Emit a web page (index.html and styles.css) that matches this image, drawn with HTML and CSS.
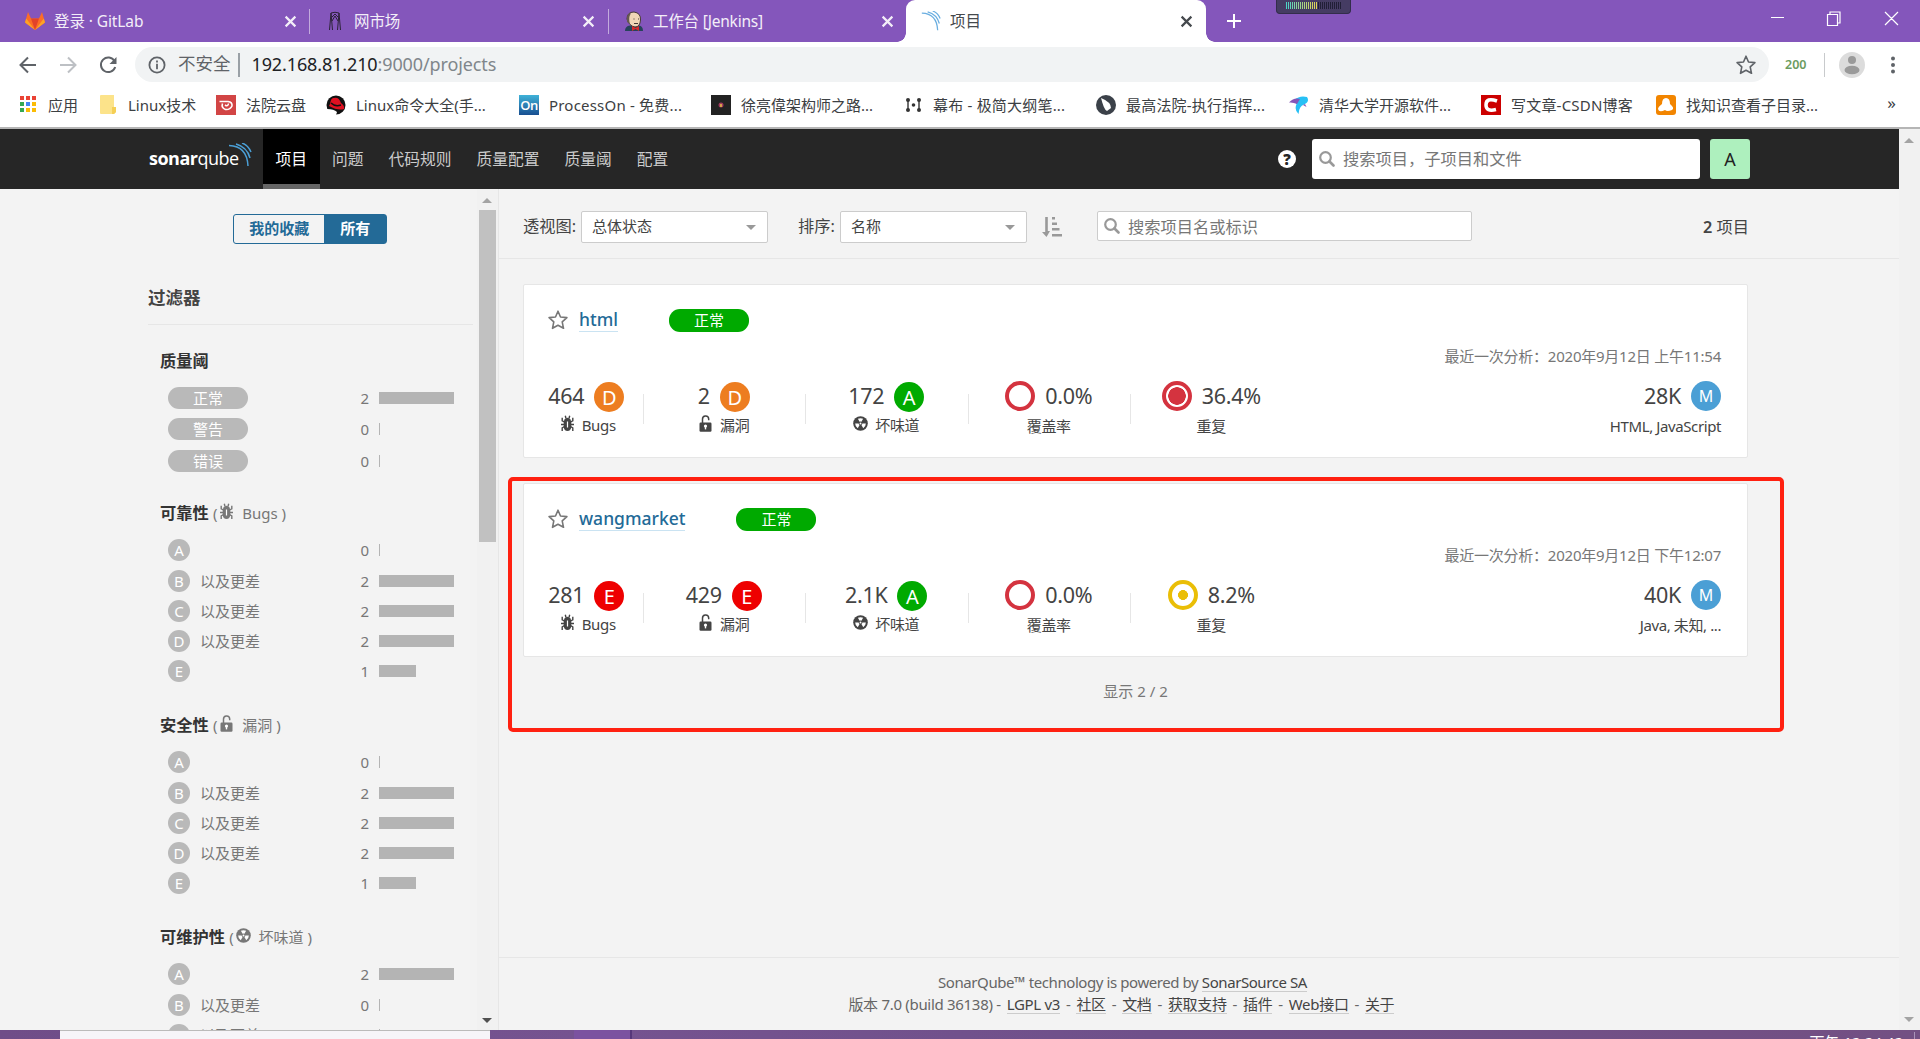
FILE: index.html
```html
<!DOCTYPE html>
<html lang="zh-CN">
<head>
<meta charset="utf-8">
<title>项目</title>
<link rel="stylesheet" href="styles.css">
</head>
<body>

<!-- shared icons -->
<svg class="defs" width="0" height="0">
  <symbol id="bug" viewBox="0 0 13 17">
    <path d="M3.500 4.500Q6.500 .8 9.500 4.500L10.300 7V12Q9.800 16 6.500 16Q3.200 16 2.700 12V7Z" fill="currentColor"/>
    <path d="M5 3.500 4.300 .8M8 3.500 8.700 .8M3.500 7 1.200 5.800V2.800M9.500 7 11.800 5.800V2.800M3 9.500H0M10 9.500H13M3.500 11.500 1.200 12.800V16M9.500 11.500 11.800 12.800V16" fill="none" stroke="currentColor" stroke-width="1.400"/>
    <path d="M5.900 6.500h1.200v6H5.900z" fill="#fff"/>
  </symbol>
  <symbol id="lock" viewBox="0 0 14 17">
    <rect x="1" y="7.5" width="12" height="9.3" rx="1.2" fill="currentColor"/>
    <path d="M4 8V4.4A3.1 3.1 0 0 1 10.2 4v1.2" fill="none" stroke="currentColor" stroke-width="1.5"/>
    <circle cx="7" cy="11" r="1.6" fill="#fff"/>
    <path d="M6.3 11h1.4v3.4H6.3z" fill="#fff"/>
  </symbol>
  <symbol id="smell" viewBox="0 0 16 16">
    <circle cx="8" cy="8" r="7.8" fill="currentColor"/>
    <path d="M7 6.200 5.200 3Q8 1.600 10.800 3L9 6.200Q8 5.600 7 6.200ZM6 8H2.300Q2.300 11.300 5.100 13L7 9.700Q6 9 6 8ZM10 8H13.700Q13.700 11.300 10.900 13L9 9.700Q10 9 10 8Z" fill="#fff"/>
    <circle cx="8" cy="8" r="1" fill="#fff"/>
  </symbol>
  <symbol id="search" viewBox="0 0 16 16">
    <circle cx="6.500" cy="6.500" r="5.300" fill="none" stroke="currentColor" stroke-width="2.200"/>
    <path d="M10.500 10.500 14.500 14.500" stroke="currentColor" stroke-width="2.600" stroke-linecap="round"/>
  </symbol>
  <symbol id="star" viewBox="0 0 20 20">
    <path d="M10 1.200 12.500 7 18.900 7.600 14.200 11.900 15.500 18.300 10 15.200 4.500 18.300 5.800 11.900 1.100 7.600 7.500 7Z" fill="none" stroke="currentColor" stroke-width="1.600" stroke-linejoin="round"/>
  </symbol>
  <symbol id="waves" viewBox="0 0 24 24">
    <path d="M1 2.500Q19 3 20 23M8 1Q19 4 22 15M14 0Q20 2 23 9" fill="none" stroke="currentColor" stroke-width="1.500"/>
  </symbol>
  <symbol id="cross" viewBox="0 0 12 12">
    <path d="M1.500 1.500 10.500 10.500M10.500 1.500 1.500 10.500" stroke="currentColor" stroke-width="2"/>
  </symbol>
</svg>

<!-- browser tabs -->
<div class="tabs">
  <div class="tab tab-gitlab">
    <svg class="favicon" viewBox="0 0 20 20"><path d="M10 19 0 11.500 3 1 6 7.500H14L17 1 20 11.500Z" fill="#fc6d26"/><path d="M10 19 6 7.500H14Z" fill="#e24329"/><path d="M10 19 0 11.500 1.200 7.500ZM10 19 20 11.500 18.800 7.500Z" fill="#fca326"/></svg>
    <span class="tab-title">登录 · GitLab</span>
    <svg class="close"><use href="#cross"/></svg>
  </div>
  <div class="tab">
    <svg class="favicon thin" viewBox="0 0 14 20"><path d="M1.500 19 3 2Q7 .5 11 2L12.500 19M3 2 4.500 19M11 2 9.500 19M4 6 7 3 10 6M4 10 7 5 10 10" fill="none" stroke="#2b2237" stroke-width="1"/></svg>
    <span class="tab-title">网市场</span>
    <svg class="close"><use href="#cross"/></svg>
  </div>
  <div class="tab tab-last">
    <svg class="favicon" viewBox="0 0 20 20"><path d="M1 20Q1 15 6 14.500H15Q19 15 19 20Z" fill="#26435a"/><path d="M3 8Q3 1 10 1Q17 2 16.500 9Q16 16 11 16Q5 15 3 8Z" fill="#f0d6b7" stroke="#463a35" stroke-width="1"/><path d="M3 11Q2 3 7 2Q4 7 6 13Z" fill="#645850"/><path d="M9.500 8h1M14 8h1M10 12.500H14" stroke="#463a35"/><path d="M8 15 11.500 17 15 15V20L11.500 18 8 20Z" fill="#d7282b"/></svg>
    <span class="tab-title">工作台 [Jenkins]</span>
    <svg class="close"><use href="#cross"/></svg>
  </div>
  <div class="tab active">
    <svg class="favicon wave"><use href="#waves"/></svg>
    <span class="tab-title">项目</span>
    <svg class="close"><use href="#cross"/></svg>
  </div>
  <svg class="newtab" viewBox="0 0 16 16"><path d="M8 1V15M1 8H15" stroke="#fff" stroke-width="2"/></svg>
  <div class="meter"><i></i><b></b></div>
  <svg class="winbtns" width="130" height="16" viewBox="0 0 130 16">
    <g fill="none" stroke="#fff" stroke-width="1.200"><path d="M1 6.500H14M57.500 3.500h10v11h-10zM60 3V1H70V12H68M115 1 128 14M128 1 115 14"/></g>
  </svg>
</div>

<!-- address bar -->
<div class="toolbar">
  <svg class="navbtn" viewBox="0 0 18 18"><path d="M17 9H2M9 1.500 1.500 9 9 16.500" fill="none" stroke="#5f6368" stroke-width="2"/></svg>
  <svg class="navbtn" viewBox="0 0 18 18"><path d="M1 9H16M9 1.500 16.500 9 9 16.500" fill="none" stroke="#bdc0c4" stroke-width="2"/></svg>
  <svg class="navbtn" viewBox="0 0 18 18"><path d="M15.500 5A7.300 7.300 0 1 0 16.200 11" fill="none" stroke="#5f6368" stroke-width="2"/><path d="M17.500 1V8H10.500Z" fill="#5f6368"/></svg>
  <div class="omnibox">
    <svg class="info" viewBox="0 0 18 18"><circle cx="9" cy="9" r="7.600" fill="none" stroke="#5f6368" stroke-width="1.800"/><path d="M8.100 4.500h1.800v1.900H8.100zM8.100 7.800h1.800v5.500H8.100z" fill="#5f6368"/></svg>
    <span class="insecure">不安全</span>
    <span class="url">192.168.81.210<em>:9000/projects</em></span>
    <svg class="bookmark"><use href="#star"/></svg>
  </div>
  <span class="status">200</span>
  <svg class="person" viewBox="0 0 26 26"><circle cx="13" cy="13" r="13" fill="#dcdcdc"/><circle cx="13" cy="8" r="4" fill="#9a9a9a"/><ellipse cx="13" cy="18" rx="7.500" ry="4.300" fill="#9a9a9a"/></svg>
  <svg class="more" viewBox="0 0 4 18"><circle cx="2" cy="2.500" r="2"/><circle cx="2" cy="9" r="2"/><circle cx="2" cy="15.500" r="2"/></svg>
</div>

<!-- bookmarks -->
<div class="bookmarks">
  <div class="bm w80"><svg viewBox="0 0 20 20"><path d="M0 1h4v4H0zM6 1h4v4H6zM12 1h4v4h-4z" fill="#ea4335"/><path d="M0 7h4v4H0zM0 13h4v4H0z" fill="#34a853"/><path d="M6 7h4v4H6z" fill="#4285f4"/><path d="M12 7h4v4h-4zM6 13h4v4H6zM12 13h4v4h-4z" fill="#fbbc05"/></svg>应用</div>
  <div class="bm w116"><svg viewBox="0 0 20 20"><path d="M1 0h13v12h2v5l-2 2H1Q0 19 0 18V1Q0 0 1 0Z" fill="#fce38a"/><path d="M12 12h4v5l-2 2h-2z" fill="#f5cf55"/></svg>Linux技术</div>
  <div class="bm w110"><svg viewBox="0 0 20 20"><path d="M0 0h20v20H0z" fill="#d24545"/><path d="M3.500 6.500H12Q16.500 7 16 11Q14 15 9.500 14.500Q5 13 6.500 8.500M9 10Q12 12 12.500 8.500" fill="none" stroke="#fff" stroke-width="1.600"/></svg>法院云盘</div>
  <div class="bm w193"><svg viewBox="0 0 20 20"><circle cx="10" cy="10" r="9.500" fill="#111"/><path d="M4 9Q5 2 8 3Q13 2 15 8Q19 11 18 14Q12 16 3 11Z" fill="#e01020"/><path d="M5 8Q9 12 15 10" fill="none" stroke="#111" stroke-width="1.500"/><path d="M1 14Q8 14 11 17L10 20H0Z" fill="#fff"/></svg>Linux命令大全(手...</div>
  <div class="bm w192"><i class="on">On</i><span class="wide">ProcessOn - 免费...</span></div>
  <div class="bm w192"><svg viewBox="0 0 20 20"><path d="M0 0h20v20H0z" fill="#222"/><circle cx="10" cy="10" r="2.500" fill="#a33b5f"/><path d="M9 9h2v3H9z" fill="#d5a14b"/></svg>徐亮偉架构师之路...</div>
  <div class="bm w193"><svg viewBox="0 0 20 20"><g fill="#333"><circle cx="5" cy="5" r="2"/><circle cx="16" cy="5" r="2"/><circle cx="5" cy="15" r="2"/><circle cx="16" cy="15" r="2"/><circle cx="10.500" cy="10" r="1.800"/><path d="M4.300 5h1.400v10H4.300zM15.300 5h1.400v10h-1.400z"/></g></svg><span class="wide">幕布 - 极简大纲笔...</span></div>
  <div class="bm w193"><svg viewBox="0 0 20 20"><circle cx="10" cy="10" r="10" fill="#3b4149"/><path d="M5 3Q15 7 15 13L11 16Q8 15 5 3Z" fill="#fff"/></svg><span class="wide">最高法院-执行指挥...</span></div>
  <div class="bm w192"><svg viewBox="0 0 20 20"><path d="M5 5Q11 0 18 2Q21 7 15 9.500Q10 11 9.500 19Q5 15 7.500 9Z" fill="#27c0f5"/><path d="M0 7.500Q5 2 11 4L8 9Q4 7 0 7.500Z" fill="#8656b8"/><path d="M16 9 17.500 12 14 10Z" fill="#8656b8"/></svg>清华大学开源软件...</div>
  <div class="bm w175"><svg viewBox="0 0 20 20"><path d="M0 0h20v20H0z" fill="#c00"/><path d="M16 6Q5 2 5 10Q5 17 15 14.500" fill="none" stroke="#fff" stroke-width="3.500"/></svg><span class="wide">写文章-CSDN博客</span></div>
  <div class="bm"><svg viewBox="0 0 20 20"><rect width="20" height="20" rx="3" fill="#f28500"/><path d="M10 3Q14 3 14 9Q19 13 16 15Q11 17 9 15Q3 18 2 14Q2 12 6 9Q6 3 10 3Z" fill="#fff"/></svg>找知识查看子目录...</div>
  <span class="chevrons">»</span>
</div>

<div class="viewport">
<div class="page">

  <div class="navbar">
    <div class="logo"><b>sonar</b>qube<svg><use href="#waves"/></svg></div>
    <a class="active">项目</a><a>问题</a><a>代码规则</a><a>质量配置</a><a>质量阈</a><a>配置</a>
    <span class="help">?</span>
    <div class="global-search"><svg><use href="#search"/></svg>搜索项目，子项目和文件</div>
    <span class="avatar">A</span>
  </div>

  <div class="content">
    <div class="side">
      <div class="toggle"><span>我的收藏</span><span class="on">所有</span></div>
      <h2>过滤器</h2>

      <div class="facet gates">
        <h3>质量阈</h3>
        <div class="row"><span class="level">正常</span><span class="num">2</span><i class="bar full"></i></div>
        <div class="row"><span class="level">警告</span><span class="num">0</span><i class="bar"></i></div>
        <div class="row"><span class="level">错误</span><span class="num">0</span><i class="bar"></i></div>
      </div>

      <div class="facet">
        <h3>可靠性 <small>( <svg><use href="#bug"/></svg> Bugs )</small></h3>
        <div class="row"><span class="rate">A</span><span class="num">0</span><i class="bar"></i></div>
        <div class="row"><span class="rate">B</span>以及更差<span class="num">2</span><i class="bar full"></i></div>
        <div class="row"><span class="rate">C</span>以及更差<span class="num">2</span><i class="bar full"></i></div>
        <div class="row"><span class="rate">D</span>以及更差<span class="num">2</span><i class="bar full"></i></div>
        <div class="row"><span class="rate">E</span><span class="num">1</span><i class="bar half"></i></div>
      </div>

      <div class="facet">
        <h3>安全性 <small>( <svg><use href="#lock"/></svg> 漏洞 )</small></h3>
        <div class="row"><span class="rate">A</span><span class="num">0</span><i class="bar"></i></div>
        <div class="row"><span class="rate">B</span>以及更差<span class="num">2</span><i class="bar full"></i></div>
        <div class="row"><span class="rate">C</span>以及更差<span class="num">2</span><i class="bar full"></i></div>
        <div class="row"><span class="rate">D</span>以及更差<span class="num">2</span><i class="bar full"></i></div>
        <div class="row"><span class="rate">E</span><span class="num">1</span><i class="bar half"></i></div>
      </div>

      <div class="facet">
        <h3>可维护性 <small>( <svg><use href="#smell"/></svg> 坏味道 )</small></h3>
        <div class="row"><span class="rate">A</span><span class="num">2</span><i class="bar full"></i></div>
        <div class="row"><span class="rate">B</span>以及更差<span class="num">0</span><i class="bar"></i></div>
        <div class="row"><span class="rate">C</span>以及更差<span class="num">0</span><i class="bar"></i></div>
      </div>
    </div>
    <div class="side-scroll"><i class="up"></i><i class="thumb"></i><i class="down"></i></div>

    <div class="main">
      <div class="filters">
        <label>透视图:</label><div class="select view">总体状态</div>
        <label>排序:</label><div class="select">名称</div>
        <svg class="sort" viewBox="0 0 20 20"><path d="M3.200 0h2.600v14H8L4.500 20 0 15h3.200zM10 0h3v2.600h-3zM10 5.500h5v2.600h-5zM10 11h7.500v2.600H10zM10 17h10v2.600H10z" fill="#999"/></svg>
        <div class="search"><svg><use href="#search"/></svg><span>搜索项目名或标识</span></div>
        <span class="total"><b>2</b> 项目</span>
      </div>

      <div class="card">
        <div class="head"><svg><use href="#star"/></svg><a>html</a><span class="level">正常</span></div>
        <div class="date">最近一次分析：2020年9月12日 上午11:54</div>
        <div class="measures">
          <div class="measure first"><p>464<span class="rate d">D</span></p><p class="label"><svg class="bug"><use href="#bug"/></svg>Bugs</p></div>
          <div class="measure"><p>2<span class="rate d">D</span></p><p class="label"><svg><use href="#lock"/></svg>漏洞</p></div>
          <div class="measure"><p>172<span class="rate a">A</span></p><p class="label"><svg><use href="#smell"/></svg>坏味道</p></div>
          <div class="measure"><p><i class="ring"></i>0.0%</p><p class="label low-label">覆盖率</p></div>
          <div class="measure last"><p><i class="ring dup"></i>36.4%</p><p class="label low-label">重复</p></div>
          <div class="size"><p>28K<span class="rate m">M</span></p><p class="label low-label">HTML, JavaScript</p></div>
        </div>
      </div>

      <div class="card">
        <div class="head"><svg><use href="#star"/></svg><a>wangmarket</a><span class="level">正常</span></div>
        <div class="date">最近一次分析：2020年9月12日 下午12:07</div>
        <div class="measures">
          <div class="measure first"><p>281<span class="rate e">E</span></p><p class="label"><svg class="bug"><use href="#bug"/></svg>Bugs</p></div>
          <div class="measure"><p>429<span class="rate e">E</span></p><p class="label"><svg><use href="#lock"/></svg>漏洞</p></div>
          <div class="measure"><p>2.1K<span class="rate a">A</span></p><p class="label"><svg><use href="#smell"/></svg>坏味道</p></div>
          <div class="measure"><p><i class="ring"></i>0.0%</p><p class="label low-label">覆盖率</p></div>
          <div class="measure last"><p><i class="ring low"></i>8.2%</p><p class="label low-label">重复</p></div>
          <div class="size"><p>40K<span class="rate m">M</span></p><p class="label low-label">Java, 未知, ...</p></div>
        </div>
      </div>

      <div class="count">显示 2 / 2</div>
      <div class="footer">
        <div class="powered">SonarQube™ technology is powered by <a>SonarSource SA</a></div>
        <div class="links">版本 7.0 (build 36138) - <a>LGPL v3</a> - <a>社区</a> - <a>文档</a> - <a>获取支持</a> - <a>插件</a> - <a>Web接口</a> - <a>关于</a></div>
      </div>
      <div class="mark"></div>
    </div>
  </div>
</div>
<div class="page-scroll"><i class="up"></i><i class="down"></i></div>
</div>

<div class="taskbar"><i class="find"></i><i class="task"></i><span class="clock">下午 12:24:42</span></div>

</body>
</html>
```
FILE: styles.css
```css
* {
  box-sizing: border-box;
}

body {
  margin: 0;
  height: 1039px;
  overflow: hidden;
  background: #f3f3f3;
  color: #444;
  font: 15px/22px "Noto Sans", "Noto Sans CJK SC", sans-serif;
  white-space: nowrap;
}

p, h2, h3 {
  margin: 0;
}

svg {
  flex: none;
}

.defs {
  position: absolute;
}

/* tabs */
.tabs {
  display: flex;
  position: relative;
  height: 42px;
  background: #8456bb;
  color: #f3eef8;
}

.tab {
  display: flex;
  align-items: center;
  position: relative;
  width: 299px;
  padding: 0 14px 0 18px;
}

.tab-gitlab {
  width: 310px;
  padding: 0 13px 0 25px;
}

.tab-gitlab::after, .tab:nth-child(2)::after {
  content: "";
  position: absolute;
  right: 0;
  top: 9px;
  width: 1px;
  height: 25px;
  background: #c3abdd;
}

.tab-last {
  width: 297px;
  padding: 0 12px 0 15px;
}

.tab.active {
  width: 300px;
  padding: 0 13px 0 15px;
  background: #fff;
  border-radius: 9px 9px 0 0;
  color: #45494d;
}

.tab.active::before, .tab.active::after {
  content: "";
  position: absolute;
  bottom: 0;
  left: -9px;
  width: 9px;
  height: 9px;
  background: radial-gradient(circle at 0 0, #8456bb 8.5px, #fff 9px);
}

.tab.active::after {
  left: auto;
  right: -9px;
  background: radial-gradient(circle at 100% 0, #8456bb 8.5px, #fff 9px);
}

.favicon {
  width: 20px;
  height: 20px;
}

.favicon.thin {
  width: 14px;
  margin-right: 3px;
}

.wave {
  color: #6aaee0;
}

.tab-title {
  margin-left: 9px;
  font-size: 15.5px;
  letter-spacing: -0.1px;
}

.tab-last .tab-title {
  letter-spacing: -0.2px;
}

.close {
  width: 13px;
  height: 13px;
  margin-left: auto;
}

.newtab {
  width: 16px;
  height: 16px;
  margin: 13px 0 0 20px;
}

.meter {
  display: flex;
  position: absolute;
  left: 1276px;
  top: 0;
  width: 75px;
  height: 14px;
  padding: 2px 8px;
  background: #453c63;
  border: 1px solid #332d4b;
  border-top: 0;
  border-radius: 0 0 4px 4px;
}

.meter i, .meter b {
  width: 33px;
  height: 7px;
  background: repeating-linear-gradient(90deg, #453c63 0 1px, transparent 1px 2px), linear-gradient(90deg, #41d3cf, #9dd38a, #e2d652);
}

.meter b {
  width: 25px;
  background: repeating-linear-gradient(90deg, #453c63 0 1px, #211f36 1px 2px);
}

.winbtns {
  margin: 11px 20px 0 auto;
}

/* address bar */
.toolbar {
  display: flex;
  align-items: center;
  height: 45px;
  padding: 0 25px 0 19px;
  background: #fff;
}

.navbtn {
  width: 18px;
  height: 18px;
  margin-right: 22px;
}

.navbtn:nth-child(3) {
  margin-right: 18px;
}

.omnibox {
  display: flex;
  align-items: center;
  width: 1634px;
  height: 35px;
  padding: 0 13px 0 13px;
  background: #f1f3f4;
  border-radius: 18px;
  font-size: 17.5px;
}

.info {
  width: 18px;
  height: 18px;
}

.insecure {
  height: 24px;
  margin-left: 12px;
  padding-right: 7px;
  border-right: 2px solid #9aa0a6;
  color: #5f6368;
  line-height: 21px;
}

.url {
  margin: -2px 0 0 12px;
  color: #202124;
  font-size: 18px;
  letter-spacing: -0.12px;
}

.url em {
  color: #80868b;
  font-style: normal;
}

.bookmark {
  width: 20px;
  height: 20px;
  margin-left: auto;
  color: #5f6368;
}

.status {
  width: 56px;
  padding-left: 16px;
  border-right: 1px solid #c8cacc;
  color: #6c9c60;
  font: 600 12.5px/24px "Noto Sans", sans-serif;
}

.person {
  width: 26px;
  height: 26px;
  margin-left: 14px;
}

.more {
  width: 4px;
  height: 20px;
  margin-left: auto;
  fill: #5f6368;
}

/* bookmarks */
.bookmarks {
  display: flex;
  position: relative;
  height: 42px;
  padding: 7px 0 0 20px;
  background: #fff;
  border-bottom: 2px solid #b5b5b5;
  color: #3c4043;
}

.bm {
  display: flex;
  align-items: center;
  height: 22px;
  gap: 10px;
}

.bm svg, .bm .on {
  width: 20px;
  height: 20px;
}

.bm .on {
  background: linear-gradient(#3fb2d8, #184f91);
  color: #fff;
  font: 600 13px/20px "Open Sans", sans-serif;
  letter-spacing: -0.5px;
  text-align: center;
}

.wide { letter-spacing: 0.2px; }
.w80 { width: 80px; }
.w80, .w116 { gap: 8px; }
.w116 { width: 116px; }
.w110 { width: 110px; }
.w193 { width: 193px; }
.w192 { width: 192px; }
.w175 { width: 175px; }

.chevrons {
  margin: -2px 24px 0 auto;
  font-size: 17px;
}

/* page */
.viewport {
  display: flex;
  height: 901px;
  overflow: hidden;
}

.page {
  width: 1899px;
}

.navbar {
  display: flex;
  height: 60px;
  padding-left: 149px;
  background: #262626;
  color: #ccc;
  font-size: 15.75px;
}

.navbar a {
  height: 60px;
  padding: 0 12.5px;
  line-height: 61px;
}

.navbar a.active {
  background: #000;
  border-bottom: 5px solid #666;
  color: #fff;
}

.logo {
  position: relative;
  width: 114px;
  color: #fff;
  font: 18px/58px "Open Sans", sans-serif;
  letter-spacing: -0.5px;
}

.logo svg {
  position: absolute;
  left: 79px;
  top: 14px;
  width: 24px;
  height: 24px;
  color: #4b9fd5;
}

.help {
  width: 18px;
  height: 18px;
  margin: 21px 16px 0 auto;
  background: #fff;
  border-radius: 9px;
  color: #262626;
  font: 900 15px/18px "Open Sans", sans-serif;
  text-align: center;
}

.global-search {
  display: flex;
  align-items: center;
  width: 388px;
  height: 40px;
  margin: 10px 10px 0 0;
  padding-left: 7px;
  background: #fff;
  border-radius: 3px;
  color: #777;
  font-size: 16.25px;
}

.global-search svg, .search svg {
  width: 16px;
  height: 16px;
  margin-right: 8px;
  color: #999;
}

.avatar {
  width: 40px;
  height: 40px;
  margin: 10px 149px 0 0;
  background: #aef0be;
  border-radius: 3px;
  color: #222;
  font-size: 18px;
  line-height: 41px;
  text-align: center;
}

.content {
  display: flex;
  height: 841px;
}

/* filters on the left */
.side {
  width: 477px;
  height: 841px;
  padding: 25px 4px 0 148px;
  overflow: hidden;
}

.toggle {
  display: flex;
  width: 154px;
  height: 30px;
  margin-left: 85px;
  border: 1px solid #236a97;
  border-radius: 3px;
  color: #236a97;
  font-weight: 600;
  line-height: 27px;
  text-align: center;
}

.toggle span {
  width: 91px;
}

.toggle .on {
  width: 62px;
  background: #236a97;
  color: #fff;
}

.side h2 {
  height: 81px;
  border-bottom: 1px solid #e6e6e6;
  font-size: 17.5px;
  line-height: 107px;
}

.facet {
  padding: 24px 0 0 12px;
  margin-bottom: 2.5px;
}

.facet h3 {
  height: 33px;
  color: #333;
  font-size: 16.25px;
  font-weight: 600;
  line-height: 24px;
}

.facet small {
  display: inline-block;
  color: #777;
  font-size: 15px;
  font-weight: 400;
}

.facet small svg {
  width: 15px;
  height: 17px;
  margin: 0 4px 0 -2px;
  vertical-align: -1px;
}

.gates {
  padding-top: 24px;
  margin-bottom: 0.4px;
}

.row {
  display: flex;
  align-items: center;
  height: 30.2px;
  padding-left: 8px;
  color: #777;
}

.row:nth-child(2) {
  height: 31.6px;
}

.gates .row {
  height: 31.6px;
}

.level {
  width: 80px;
  height: 22px;
  background: #b9b9b9;
  border-radius: 11px;
  color: #fff;
  line-height: 22px;
  text-align: center;
}

.rate {
  width: 22px;
  height: 22px;
  margin-right: 10px;
  background: #b9b9b9;
  border-radius: 50%;
  color: #fff;
  line-height: 23px;
  text-align: center;
}

.num {
  width: 20px;
  margin-left: auto;
  text-align: right;
}

.bar {
  width: 1px;
  height: 12px;
  margin: 0 93px 0 10px;
  background: #b4b4b4;
}

.bar.full {
  width: 75px;
  margin-right: 19px;
}

.bar.half {
  width: 37px;
  margin-right: 57px;
}

/* scrollbars */
.side-scroll, .page-scroll {
  display: flex;
  flex-direction: column;
  align-items: center;
  background: #f1f1f1;
}

.side-scroll {
  width: 22px;
  padding: 9px 1px 7px 0;
  border-right: 1px solid #e6e6e6;
}

.page-scroll {
  width: 21px;
  padding: 9px 2px 8px 0;
}

.up {
  border: 5px solid transparent;
  border-top: 0;
  border-bottom: 5px solid #a3a3a3;
}

.down {
  margin-top: auto;
  border: 5px solid transparent;
  border-bottom: 0;
  border-top: 5px solid #505050;
}

.page-scroll .down {
  border-top-color: #a3a3a3;
}

.thumb {
  width: 17px;
  height: 332px;
  margin-top: 7px;
  background: #c1c1c1;
}

/* projects */
.main {
  display: flex;
  flex-direction: column;
  position: relative;
  width: 1400px;
}

.filters {
  display: flex;
  align-items: center;
  height: 70px;
  padding: 7px 150px 0 24px;
  border-bottom: 1px solid #e6e6e6;
  font-size: 16.25px;
}

.filters label {
  width: 58px;
  margin-top: -2px;
}

.view + label {
  width: 42px;
}

.select {
  position: relative;
  width: 187px;
  height: 32px;
  padding-left: 10px;
  background: #fff;
  border: 1px solid #ccc;
  border-radius: 2px;
  font-size: 15px;
  line-height: 29px;
}

.select::after {
  content: "";
  position: absolute;
  right: 11px;
  top: 13px;
  border: 5px solid transparent;
  border-top-color: #999;
  border-bottom: 0;
}

.view {
  margin-right: 30px;
}

.sort {
  width: 20px;
  height: 20px;
  margin-left: 15px;
}

.search {
  display: flex;
  align-items: center;
  width: 375px;
  height: 30px;
  margin: -2px 0 0 35px;
  padding-left: 6px;
  background: #fff;
  border: 1px solid #ccc;
  border-radius: 2px;
  color: #777;
}

.search span {
  padding-top: 2px;
}

.total {
  margin-left: auto;
}

.total b {
  font-weight: 600;
}

.card {
  width: 1225px;
  height: 174px;
  margin: 25px 0 0 24px;
  padding: 23px 26px 0 24px;
  background: #fff;
  border: 1px solid #e6e6e6;
  border-radius: 2px;
}

.head {
  display: flex;
  align-items: center;
  height: 25px;
}

.head svg {
  width: 20px;
  height: 20px;
  margin: -2px 11px 0 0;
  color: #777;
}

.head a {
  height: 24px;
  margin-top: -1px;
  border-bottom: 1px solid #cae3f2;
  color: #236a97;
  font-size: 17.5px;
  font-weight: 500;
  line-height: 22px;
}

.head .level {
  height: 23px;
  margin-left: 51px;
  background: #0a0;
}

.date {
  margin-top: 12px;
  color: #777;
  letter-spacing: -0.23px;
  text-align: right;
}

.measures {
  display: flex;
  margin-top: 14px;
}

.measure {
  position: relative;
  width: 162.5px;
}

.measure p, .size p {
  display: flex;
  align-items: center;
  justify-content: center;
  height: 30px;
  font-size: 21.5px;
  letter-spacing: -0.3px;
}

.measure::after {
  content: "";
  position: absolute;
  right: -1px;
  top: 13px;
  width: 1px;
  height: 30px;
  background: #e6e6e6;
}

.measure.last::after {
  content: none;
}

.measure.first {
  width: 94.5px;
  padding-right: 18px;
}

.measures .rate {
  width: 30px;
  height: 30px;
  margin: 2px 0 0 10px;
  font-size: 20px;
  line-height: 31px;
  letter-spacing: 0;
}

.rate.d { background: #ed7d20; }
.rate.e { background: #e00; }
.rate.a { background: #0a0; }

.measures .rate.m {
  margin-top: 0;
  background: #4b9fd5;
  font-size: 16px;
}

.measures .label {
  height: 22px;
  margin-top: 3px;
  font-size: 15px;
}

.measures .low-label {
  margin-top: 4px;
}

.label svg {
  width: 15px;
  height: 17px;
  margin: -4px 7px 0 0;
}

.label .bug {
  width: 13px;
  margin-right: 8px;
}

.label .bug {
  margin-left: 4px;
}

.ring {
  width: 30px;
  height: 30px;
  margin-right: 10px;
  border: 4px solid #d4333f;
  border-radius: 50%;
}

.ring.dup {
  background: radial-gradient(circle, #d4333f 8.5px, #fff 9px);
}

.ring.low {
  border-color: #eabe06;
  background: radial-gradient(circle, #eabe06 4.7px, #fff 5.2px);
}

.size {
  margin-left: auto;
}

.size p {
  justify-content: flex-end;
}

.size .label {
  letter-spacing: -0.4px;
}

.count {
  margin: 23px 151px 0 0;
  padding-left: 24px;
  color: #777;
  text-align: center;
}

.footer {
  height: 73px;
  margin-top: auto;
  padding: 13px 153px 0 0;
  border-top: 1px solid #e6e6e6;
  color: #666;
  letter-spacing: -0.3px;
  text-align: center;
}

.footer a {
  display: inline-block;
  height: 21px;
  border-bottom: 1px solid #ccc;
  color: #444;
}

.powered {
  letter-spacing: -0.42px;
}

.links a {
  margin: 0 2.3px;
}

/* red frame around the second project */
.mark {
  position: absolute;
  left: 9px;
  top: 288px;
  width: 1276px;
  height: 255px;
  border: 4px solid #ff2010;
  border-radius: 5px;
}

/* taskbar */
.taskbar {
  display: flex;
  height: 9px;
  padding-left: 60px;
  overflow: hidden;
  background: linear-gradient(90deg, #6f4d88, #755390 30%, #6f508a 60%, #735083);
}

.find {
  width: 430px;
  background: #f6f5f9;
  border-top: 1px solid #bbb;
}

.task {
  width: 58px;
  margin-left: 84px;
  background: #7b52a0;
  border-right: 2px solid #56377a;
}

.clock {
  margin: 2px 5px 0 auto;
  padding-right: 11px;
  border-right: 1px solid #a994b8;
  color: #fff;
  line-height: 20px;
}
```
